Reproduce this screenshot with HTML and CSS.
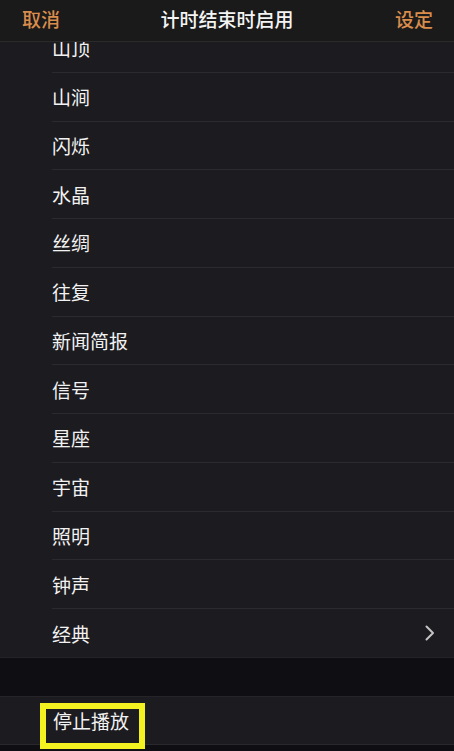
FILE: index.html
```html
<!DOCTYPE html>
<html lang="zh-CN">
<head>
    <meta charset="UTF-8">
    <meta name="viewport" content="width=device-width, initial-scale=1.0">
    <title>计时结束时启用</title>
    <link rel="stylesheet" href="styles.css">
</head>
<body>
    <header class="nav-bar">
        <a href="#" class="nav-btn">取消</a>
        <h1>计时结束时启用</h1>
        <a href="#" class="nav-btn">设定</a>
    </header>
    <main class="screen">
        <ul class="tone-list scrolled">
            <li>山顶</li>
            <li>山涧</li>
            <li>闪烁</li>
            <li>水晶</li>
            <li>丝绸</li>
            <li>往复</li>
            <li>新闻简报</li>
            <li>信号</li>
            <li>星座</li>
            <li>宇宙</li>
            <li>照明</li>
            <li>钟声</li>
            <li class="more">经典
                <svg class="chevron" width="10" height="16" viewBox="0 0 10 16">
                    <path d="M1.5 1.5 L8 8 L1.5 14.5" fill="none" stroke="#c4c4c6" stroke-width="2" stroke-linecap="round" stroke-linejoin="round"/>
                </svg>
            </li>
        </ul>
        <div class="section-gap"></div>
        <ul class="tone-list stop">
            <li>停止播放</li>
        </ul>
        <!-- yellow annotation box -->
        <div class="highlight"></div>
    </main>
</body>
</html>
```

FILE: styles.css
```css
html, body {
    margin: 0;
    padding: 0;
}
body {
    width: 454px;
    height: 751px;
    overflow: hidden;
    background-color: #0f0e12;
    color: #f2f2f2;
    font-family: "Noto Sans CJK SC", "Noto Sans", sans-serif;
    position: relative;
}
.nav-bar {
    position: relative;
    z-index: 2; /* stays above the scrolled list */
    display: flex;
    align-items: center;
    justify-content: space-between;
    padding: 0 21px 4px 22px;
    box-sizing: border-box;
    height: 42px;
    background-color: #1a1a1a;
    border-bottom: 1px solid #2a2a2a;
}
.nav-bar h1 {
    margin: 0;
    font-size: 19px;
    font-weight: 500;
    color: #f4f4f4;
    position: absolute; /* centered title over the buttons */
    left: 0;
    right: 0;
    top: 0;
    line-height: 37px;
    text-align: center;
    pointer-events: none;
}
.nav-btn {
    color: #d98c4c;
    text-decoration: none;
    font-size: 19px;
    font-weight: 500;
    line-height: 24px;
}
.screen {
    display: block;
}
.tone-list {
    list-style: none;
    margin: 0;
    padding: 0;
    background-color: #1c1b1f;
}
.tone-list.scrolled {
    margin-top: -18px; /* list scrolled under the bar */
}
.tone-list li {
    margin-left: 52px;
    padding-right: 19px;
    height: 47.75px;
    border-bottom: 1px solid #2b2a2e;
    display: flex;
    align-items: center;
    justify-content: space-between;
    font-size: 19px;
    color: #f2f2f2;
}
.tone-list li:last-child {
    border-bottom: none;
}
.tone-list.scrolled li:last-child {
    height: 48px;
}
.chevron {
    display: block;
}
.section-gap {
    height: 38px;
    border-top: 1px solid #242327;
    background-color: #0f0e12;
}
.tone-list.stop {
    border-top: 1px solid #252428;
    border-bottom: 1px solid #29282c;
}
.tone-list.stop li {
    height: 47px;
    margin-left: 53px;
}
.highlight {
    position: absolute;
    left: 40px;
    top: 703px;
    width: 105px;
    height: 46px;
    box-sizing: border-box;
    border: 6px solid #f3f11f;
}
```
